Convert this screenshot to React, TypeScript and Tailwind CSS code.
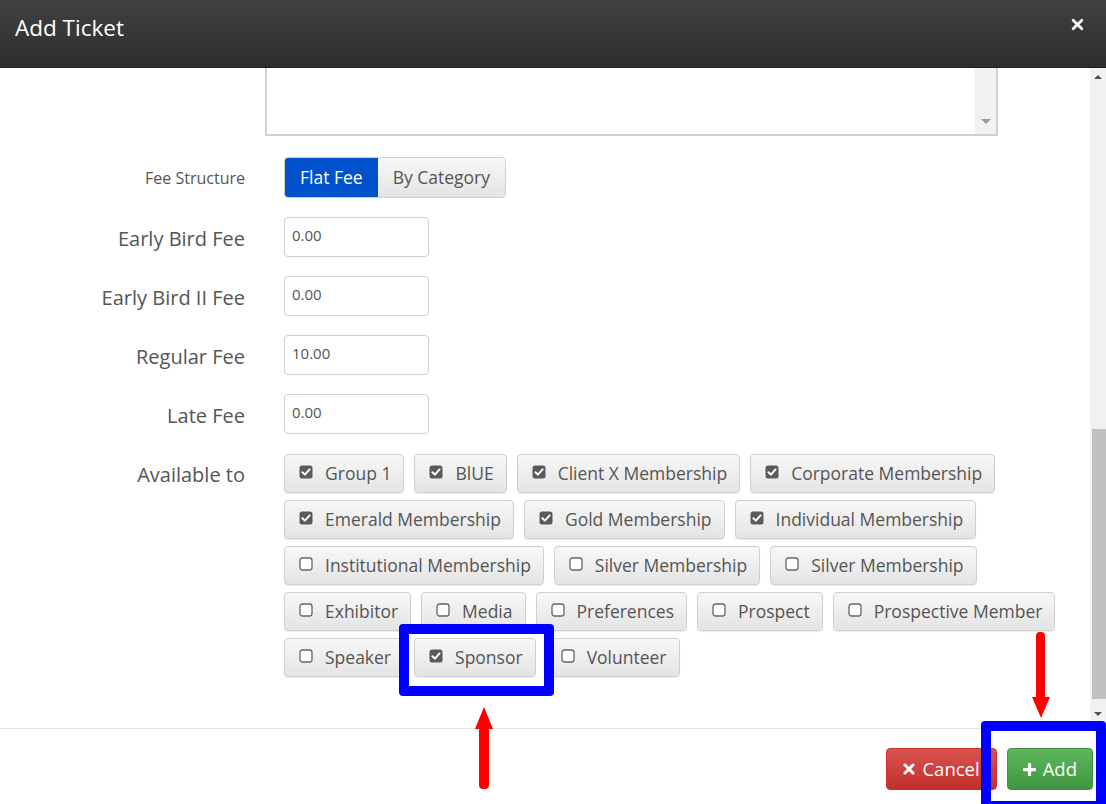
import React from "react";

type Opt = { label: string; checked: boolean };

const rows: Opt[] = [
  { label: "Group 1", checked: true },
  { label: "BlUE", checked: true },
  { label: "Client X Membership", checked: true },
  { label: "Corporate Membership", checked: true },
  { label: "Emerald Membership", checked: true },
  { label: "Gold Membership", checked: true },
  { label: "Individual Membership", checked: true },
  { label: "Institutional Membership", checked: false },
  { label: "Silver Membership", checked: false },
  { label: "Silver Membership", checked: false },
  { label: "Exhibitor", checked: false },
  { label: "Media", checked: false },
  { label: "Preferences", checked: false },
  { label: "Prospect", checked: false },
  { label: "Prospective Member", checked: false },
  { label: "Speaker", checked: false },
  { label: "Sponsor", checked: true },
  { label: "Volunteer", checked: false },
];

const fees = [
  { label: "Early Bird Fee", value: "0.00" },
  { label: "Early Bird II Fee", value: "0.00" },
  { label: "Regular Fee", value: "10.00" },
  { label: "Late Fee", value: "0.00" },
];

function Box({ checked }: { checked: boolean }) {
  if (checked) {
    return (
      <svg width="14" height="14" viewBox="0 0 14 14" className="mt-[-4px] shrink-0">
        <rect x="0.5" y="0.5" width="13" height="13" rx="2.5" fill="#5a5a5a" />
        <path d="M3.4 7.2 L5.9 9.6 L10.6 4.4" stroke="#fff" strokeWidth="2" fill="none" strokeLinecap="round" strokeLinejoin="round" />
      </svg>
    );
  }
  return (
    <svg width="14" height="14" viewBox="0 0 14 14" className="mt-[-4px] shrink-0">
      <rect x="1" y="1" width="12" height="12" rx="2.5" fill="#fff" stroke="#666" strokeWidth="1.3" />
    </svg>
  );
}

function CheckButton({ opt }: { opt: Opt }) {
  return (
    <div className="flex h-[39px] items-center gap-[12px] rounded-[4px] border border-[#cfcfcf] bg-gradient-to-b from-[#f8f8f8] to-[#e4e4e4] pl-[14px] pr-[12px] text-[17.5px] text-[#555] shadow-[0_1px_1px_rgba(0,0,0,0.08)]">
      <Box checked={opt.checked} />
      <span>{opt.label}</span>
    </div>
  );
}

function Scrollbar() {
  return (
    <div className="flex w-[16px] shrink-0 flex-col bg-[#f1f1f1]">
      <div className="flex h-[17px] items-center justify-center">
        <div className="h-0 w-0 border-x-[4px] border-b-[4px] border-x-transparent border-b-[#505050]" />
      </div>
      <div className="flex-1 pt-[344px] pb-[6px] pl-[2px]">
        <div className="h-full bg-[#c1c1c1]" />
      </div>
      <div className="flex h-[17px] items-center justify-center">
        <div className="h-0 w-0 border-x-[4px] border-t-[4px] border-x-transparent border-t-[#505050]" />
      </div>
    </div>
  );
}

export default function App() {
  return (
    <div
      className="relative flex h-[804px] w-[1106px] flex-col overflow-hidden bg-white"
      style={{ fontFamily: '"Open Sans", "Noto Sans", sans-serif' }}
    >
      <header className="flex h-[68px] shrink-0 items-center justify-between border-b border-[#1e1e1e] bg-gradient-to-b from-[#414141] to-[#2d2d2d] pb-[12px] pl-[15px] pr-[22px]">
        <h1 className="text-[22.5px] text-white">Add Ticket</h1>
        <svg width="13" height="13" viewBox="0 0 12 12" className="mt-[-6px]">
          <path d="M2 2 L10 10 M10 2 L2 10" stroke="#fff" strokeWidth="2.6" strokeLinecap="round" />
        </svg>
      </header>

      <div className="flex h-[654px] shrink-0">
        <div className="flex-1 overflow-hidden">
          <div className="ml-[265px] mt-[-2px] flex h-[70px] w-[733px] justify-end border-2 border-t-0 border-[#d0d0d0] bg-white">
            <div className="flex w-[21px] flex-col justify-end bg-[#f1f1f1] pb-[10px]">
              <div className="mx-auto h-0 w-0 border-x-[5px] border-t-[5px] border-x-transparent border-t-[#9a9a9a]" />
            </div>
          </div>

          <div className="mt-[21px] flex items-center">
            <div className="w-[245px] text-right text-[16px] text-[#555]">Fee Structure</div>
            <div className="ml-[39px] flex h-[41px] overflow-hidden rounded-[4px] border border-[#cfcfcf] text-[17.5px]">
              <div className="flex items-center bg-[#0052cc] px-[15px] text-white">Flat Fee</div>
              <div className="flex items-center bg-gradient-to-b from-[#f8f8f8] to-[#e4e4e4] px-[15px] text-[#555]">By Category</div>
            </div>
          </div>

          <div className="mt-[19px] flex flex-col gap-[19px]">
            {fees.map((f) => (
              <div key={f.label} className="flex items-center">
                <div className="w-[245px] pt-[4px] text-right text-[20px] text-[#555]">{f.label}</div>
                <div className="ml-[39px] flex h-[40px] w-[145px] items-center rounded-[4px] border border-[#cfcfcf] bg-white px-[7px] pb-[4px] text-[15px] text-[#555]">
                  {f.value}
                </div>
              </div>
            ))}
          </div>

          <div className="mt-[20px] flex items-start">
            <div className="w-[245px] pt-[6px] text-right text-[20px] text-[#555]">Available to</div>
            <div className="ml-[39px] flex w-[790px] flex-wrap gap-x-[10px] gap-y-[7px]">
              {rows.map((o, i) => (
                <CheckButton key={i} opt={o} />
              ))}
            </div>
          </div>
        </div>
        <Scrollbar />
      </div>

      <div className="mt-[6px] flex flex-1 items-start justify-end gap-[10px] border-t border-[#e5e5e5] pr-[13px] pt-[19px]">
        <div className="flex h-[42px] items-center gap-[7px] rounded-[4px] border border-[#c9302c] bg-gradient-to-b from-[#d9534f] to-[#c12e2a] px-[16px] text-[18.5px] text-white">
          <svg width="12" height="12" viewBox="0 0 12 12">
            <path d="M2 2 L10 10 M10 2 L2 10" stroke="#fff" strokeWidth="3" strokeLinecap="round" />
          </svg>
          <span>Cancel</span>
        </div>
        <div className="flex h-[42px] items-center gap-[7px] rounded-[4px] border border-[#3e8f3e] bg-gradient-to-b from-[#5cb85c] to-[#419641] px-[15px] text-[18.5px] text-white">
          <svg width="13" height="13" viewBox="0 0 12 12">
            <path d="M6 1 L6 11 M1 6 L11 6" stroke="#fff" strokeWidth="3" strokeLinecap="round" />
          </svg>
          <span>Add</span>
        </div>
      </div>

      {/* annotation overlays */}
      <div className="absolute left-[399px] top-[624px] h-[72px] w-[155px] rounded-[4px] border-[10px] border-[#0000ff]" />
      <div className="absolute left-[981px] top-[721px] h-[90px] w-[125px] rounded-[4px] border-[10px] border-[#0000ff]" />

      <svg className="absolute left-[474px] top-[707px]" width="20" height="84" viewBox="0 0 20 84">
        <polygon points="10,0 19,22 1,22" fill="#ff0000" />
        <rect x="5" y="20" width="10" height="62" rx="4" fill="#ff0000" />
      </svg>
      <svg className="absolute left-[1031px] top-[631px]" width="20" height="88" viewBox="0 0 20 88">
        <rect x="5" y="1" width="9" height="68" rx="4" fill="#ff0000" />
        <polygon points="1,66 19,66 10,87" fill="#ff0000" />
      </svg>
    </div>
  );
}
